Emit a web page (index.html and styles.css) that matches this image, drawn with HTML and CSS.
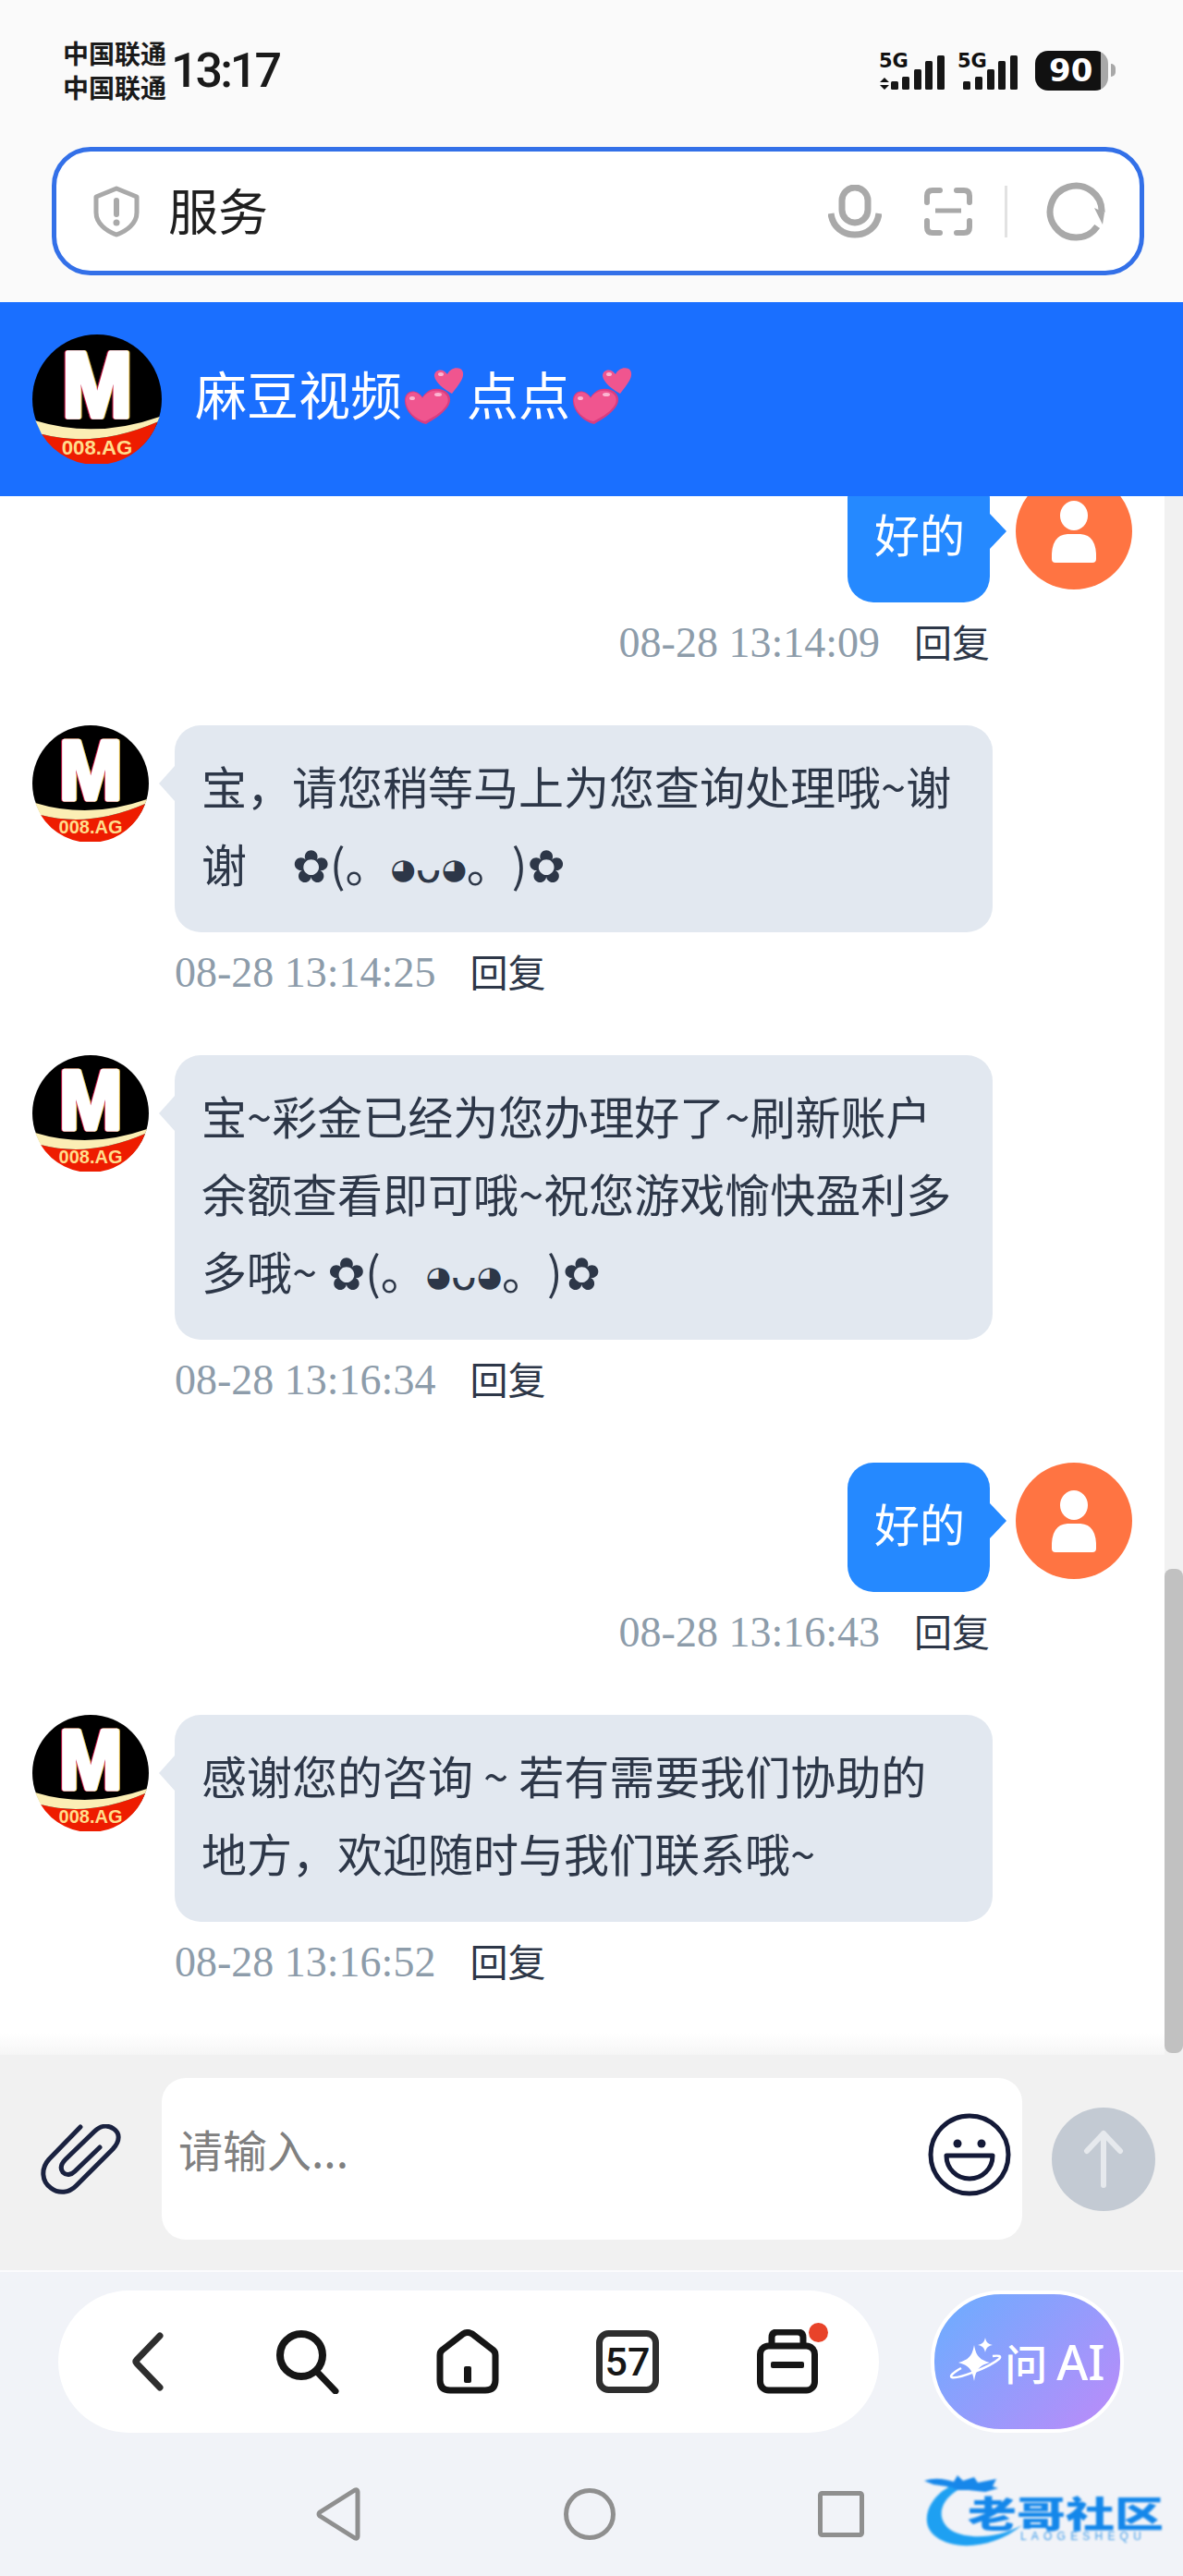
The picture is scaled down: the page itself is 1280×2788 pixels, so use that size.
FILE: index.html
```html
<!DOCTYPE html>
<html lang="zh-CN">
  <head>
    <meta charset="UTF-8" />
    <title>麻豆视频</title>
    <link rel="stylesheet" href="styles.css">
  </head>
  <body>
    <svg class="defs" width="0" height="0">
      <symbol id="logo" viewBox="0 0 126 126">
        <circle cx="63" cy="63" r="63" fill="#000" />
        <path d="M9 97 Q62 111 122 85 A63 63 0 0 1 9 97Z" fill="#ee1c00" />
        <path d="M3 84 Q62 102 124 80 L122 85 Q62 111 9 97Z" fill="#fbeeb5" />
        <text x="63" y="80" text-anchor="middle" class="logo-m" textLength="68" lengthAdjust="spacingAndGlyphs">M</text>
        <text x="63" y="117" text-anchor="middle" class="logo-ag">008.AG</text>
      </symbol>
      <symbol id="hearts" viewBox="0 0 66 64">
        <path d="M24 62 C14 60 2 50 1 38 C0 28 8 24 15 28 C17 29 19 31 20 33 C25 25 33 22 42 25 C50 28 53 36 47 44 C41 52 32 57 24 62Z" fill="#d93d80" />
        <path d="M23 59 C13 57 3 48 2 37 C2 29 9 25 15 29 C17 30 19 32 20 34 C25 27 33 24 41 27 C48 30 50 37 45 43 C40 50 31 55 23 59Z" fill="#f0558f" />
        <path d="M52 29 C44 25 34 17 33 10 C33 4 39 2 44 5 C45 6 46 7 47 8 C50 2 56 0 61 2 C65 4 65 10 62 15 C59 20 55 25 52 29Z" fill="#f0558f" />
        <ellipse cx="9" cy="34" rx="3" ry="2" fill="#fbb6d2" />
        <ellipse cx="37" cy="30" rx="4" ry="2" fill="#fbb6d2" />
        <ellipse cx="40" cy="8" rx="3" ry="2" fill="#fbb6d2" />
      </symbol>
      <symbol id="user" viewBox="0 0 126 126">
        <circle cx="63" cy="63" r="63" fill="#ff7442" />
        <ellipse cx="63" cy="46" rx="15" ry="16" fill="#fff" />
        <path d="M39 93 Q38 67 56 66 L70 66 Q88 67 87 93 Q87 97 83 97 L43 97 Q39 97 39 93Z" fill="#fff" />
      </symbol>
    </svg>

    <div class="browser-top">
      <div class="statusbar">
        <div class="carrier"><span>中国联通</span><span>中国联通</span></div>
        <div class="clock">13:17</div>
        <div class="status-icons">
          <svg class="signal" width="72" height="44" viewBox="0 0 72 44">
            <text x="0" y="18" class="five-g">5G</text>
            <path d="M6 29 L11 34 H1Z M6 42 L11 37 H1Z" fill="#111" />
            <rect x="13" y="33" width="8" height="9" rx="1.5" />
            <rect x="25" y="28" width="8" height="14" rx="1.5" />
            <rect x="38" y="20" width="8" height="22" rx="1.5" />
            <rect x="50" y="11" width="8" height="31" rx="1.5" />
            <rect x="63" y="5" width="8" height="37" rx="1.5" />
          </svg>
          <svg class="signal second" width="66" height="44" viewBox="0 0 66 44">
            <text x="0" y="18" class="five-g">5G</text>
            <rect x="6" y="33" width="8" height="9" rx="1.5" />
            <rect x="19" y="28" width="8" height="14" rx="1.5" />
            <rect x="32" y="20" width="8" height="22" rx="1.5" />
            <rect x="44" y="11" width="8" height="31" rx="1.5" />
            <rect x="57" y="5" width="8" height="37" rx="1.5" />
          </svg>
          <div class="battery"><span>90</span></div>
          <div class="battery-nub"></div>
        </div>
      </div>
      <div class="urlbar">
        <svg class="shield" width="50" height="56" viewBox="0 0 50 56">
          <path d="M25 3 L47 12 V29 C47 41 36 49 25 53 C14 49 3 41 3 29 V12Z" fill="none" stroke="#a9a9a9" stroke-width="5" stroke-linejoin="round" />
          <rect x="22" y="13" width="6" height="21" rx="3" fill="#a9a9a9" />
          <circle cx="25" cy="40" r="3.5" fill="#a9a9a9" />
        </svg>
        <div class="url-text">服务</div>
        <svg class="mic" width="58" height="58" viewBox="0 0 58 58">
          <rect x="15" y="3" width="28" height="38" rx="14" fill="none" stroke="#a9a9a9" stroke-width="7" />
          <path d="M3 31 C5 46 16 54 29 54 C42 54 53 46 55 31" fill="none" stroke="#a9a9a9" stroke-width="7" />
        </svg>
        <svg class="scan" width="52" height="52" viewBox="0 0 52 52">
          <path d="M3 16 V9 Q3 3 9 3 H17 M35 3 H43 Q49 3 49 9 V16 M49 36 V43 Q49 49 43 49 H35 M17 49 H9 Q3 49 3 43 V36" fill="none" stroke="#a9a9a9" stroke-width="6" stroke-linecap="round" />
          <path d="M12 25 H40" stroke="#a9a9a9" stroke-width="5" />
        </svg>
        <div class="url-divider"></div>
        <svg class="reload" width="64" height="64" viewBox="0 0 64 64">
          <path d="M59 40 A28 28 0 1 1 59 24" fill="none" stroke="#a9a9a9" stroke-width="7" transform="rotate(18 32 32)" />
          <path d="M52 28 L63 33 L61 46Z" fill="#a9a9a9" />
        </svg>
      </div>
    </div>

    <header class="chat-header">
      <svg class="header-logo" width="140" height="140"><use href="#logo" /></svg>
      <div class="chat-title">
        <span class="title-text">麻豆视频</span>
        <svg class="hearts" width="66" height="64"><use href="#hearts" /></svg>
        <span class="title-text">点点</span>
        <svg class="hearts" width="66" height="64"><use href="#hearts" /></svg>
      </div>
    </header>

    <main class="chat">
      <div class="chat-list">
        <div class="msg msg-me">
          <div class="msg-row">
            <div class="bubble">好的</div>
            <svg class="avatar" width="126" height="126"><use href="#user" /></svg>
          </div>
          <div class="msg-meta"><span class="msg-time">08-28 13:14:09</span><span class="msg-reply">回复</span></div>
        </div>

        <div class="msg">
          <div class="msg-row">
            <svg class="avatar" width="126" height="126"><use href="#logo" /></svg>
            <div class="bubble">宝，请您稍等马上为您查询处理哦~谢谢 &nbsp; &nbsp;<span class="kao-flower kao-indent">✿</span>(。<span class="kao-eye">◕</span><span class="kao-mouth">ᴗ</span><span class="kao-eye">◕</span>。)<span class="kao-flower">✿</span></div>
          </div>
          <div class="msg-meta"><span class="msg-time">08-28 13:14:25</span><span class="msg-reply">回复</span></div>
        </div>

        <div class="msg">
          <div class="msg-row">
            <svg class="avatar" width="126" height="126"><use href="#logo" /></svg>
            <div class="bubble">宝~彩金已经为您办理好了~刷新账户余额查看即可哦~祝您游戏愉快盈利多多哦~ <span class="kao-flower">✿</span>(。<span class="kao-eye">◕</span><span class="kao-mouth">ᴗ</span><span class="kao-eye">◕</span>。)<span class="kao-flower">✿</span></div>
          </div>
          <div class="msg-meta"><span class="msg-time">08-28 13:16:34</span><span class="msg-reply">回复</span></div>
        </div>

        <div class="msg msg-me">
          <div class="msg-row">
            <div class="bubble">好的</div>
            <svg class="avatar" width="126" height="126"><use href="#user" /></svg>
          </div>
          <div class="msg-meta"><span class="msg-time">08-28 13:16:43</span><span class="msg-reply">回复</span></div>
        </div>

        <div class="msg">
          <div class="msg-row">
            <svg class="avatar" width="126" height="126"><use href="#logo" /></svg>
            <div class="bubble">感谢您的咨询 ~ 若有需要我们协助的地方，欢迎随时与我们联系哦~</div>
          </div>
          <div class="msg-meta"><span class="msg-time">08-28 13:16:52</span><span class="msg-reply">回复</span></div>
        </div>
      </div>
      <div class="chat-fade"></div>
      <div class="scroll-track"><div class="scroll-thumb"></div></div>
    </main>

    <div class="inputbar">
      <svg class="clip" width="87" height="76" viewBox="0 0 87 76">
        <path d="M43 3 L9 38 C0 48 1 62 11 69 C20 76 31 74 38 67 L78 27 C87 17 85 9 79 5 C72 0 64 2 58 8 L27 38 C22 43 21 48 24 52 C28 56 33 55 37 51 L64 25" fill="none" stroke="#1a2240" stroke-width="5" stroke-linecap="round" />
      </svg>
      <div class="input-box">
        <span class="placeholder">请输入...</span>
        <svg class="smile" width="90" height="90" viewBox="0 0 90 90">
          <circle cx="45" cy="45" r="42" fill="none" stroke="#141a38" stroke-width="5" />
          <circle cx="32" cy="33" r="4.5" fill="#141a38" />
          <circle cx="58" cy="33" r="4.5" fill="#141a38" />
          <path d="M20 46 H70 C70 60 59 71 45 71 C31 71 20 60 20 46Z" fill="none" stroke="#141a38" stroke-width="5" stroke-linejoin="round" />
        </svg>
      </div>
      <div class="send">
        <svg width="44" height="64" viewBox="0 0 44 64">
          <path d="M22 60 V4 M4 23 L22 4 L40 23" fill="none" stroke="#e6e9ed" stroke-width="6" stroke-linecap="round" stroke-linejoin="round" />
        </svg>
      </div>
    </div>

    <div class="browser-bottom">
      <div class="toolbar-row">
        <nav class="toolbar">
          <svg class="tool" width="34" height="64" viewBox="0 0 34 64">
            <path d="M30 4 L5 30 Q3 32 5 34 L30 60" fill="none" stroke="#2e2e2e" stroke-width="7" stroke-linecap="round" stroke-linejoin="round" />
          </svg>
          <svg class="tool" width="68" height="70" viewBox="0 0 68 70">
            <circle cx="27" cy="28" r="23" fill="none" stroke="#161616" stroke-width="8" />
            <path d="M44 46 L64 67" stroke="#161616" stroke-width="7" stroke-linecap="round" />
          </svg>
          <svg class="tool" width="68" height="70" viewBox="0 0 68 70">
            <path d="M4 28 Q4 24 7 22 L29 5 Q34 2 39 5 L61 22 Q64 24 64 28 V55 Q64 66 53 66 H15 Q4 66 4 55Z" fill="none" stroke="#161616" stroke-width="7" stroke-linejoin="round" />
            <rect x="30" y="40" width="8" height="18" rx="2" fill="#161616" />
          </svg>
          <svg class="tool" width="68" height="68" viewBox="0 0 68 68">
            <rect x="3.500" y="3.500" width="61" height="61" rx="10" fill="none" stroke="#2e2e2e" stroke-width="7" />
            <text x="34" y="49" text-anchor="middle" class="tab-count">57</text>
          </svg>
          <div class="tool-bag">
            <svg width="66" height="70" viewBox="0 0 66 70">
              <path d="M16 18 V9 Q16 3 22 3 H44 Q50 3 50 9 V18" fill="none" stroke="#161616" stroke-width="7" />
              <rect x="3.500" y="18" width="59" height="48" rx="9" fill="none" stroke="#161616" stroke-width="7" />
              <rect x="15" y="35" width="36" height="7" rx="2" fill="#161616" />
            </svg>
            <span class="red-dot"></span>
          </div>
        </nav>
        <div class="ask-ai">
          <svg width="58" height="52" viewBox="0 0 58 52">
            <path d="M27 8 C29 20 33 24 44 27 C33 30 29 34 27 47 C25 34 21 30 10 27 C21 24 25 20 27 8Z" fill="#fff" />
            <path d="M39 0 C40 5 42 7 47 8 C42 9 40 11 39 16 C38 11 36 9 31 8 C36 7 38 5 39 0Z" fill="#fff" />
            <path d="M13 33 C4 38 0 42 3 43 C9 45 44 32 54 23 C57 20 54 19 47 20" fill="none" stroke="#fff" stroke-width="2.500" />
          </svg>
          <span class="ai-wen">问</span><span class="ai-label">AI</span>
        </div>
      </div>
      <div class="sysnav">
        <svg width="50" height="58" viewBox="0 0 50 58">
          <path d="M46 5 V53 Q46 56 43 55 L5 31 Q3 29 5 27 L43 3 Q46 2 46 5Z" fill="none" stroke="#8f8f8f" stroke-width="5" stroke-linejoin="round" />
        </svg>
        <svg width="56" height="56" viewBox="0 0 56 56">
          <circle cx="28" cy="28" r="25.500" fill="none" stroke="#8f8f8f" stroke-width="5" />
        </svg>
        <svg width="50" height="50" viewBox="0 0 50 50">
          <rect x="2.500" y="2.500" width="45" height="45" rx="2" fill="none" stroke="#8f8f8f" stroke-width="5" />
        </svg>
      </div>
      <div class="watermark">
        <svg width="130" height="92" viewBox="0 0 130 92">
          <path d="M2 14 C14 10 24 12 34 15 L38 8 L44 14 L56 10 L60 16 L80 12 L76 20 L82 22 L68 26 L50 24 L36 24 L26 20 L12 18Z" fill="#1787ea" />
          <path d="M30 20 C6 32 -4 60 14 74 C34 90 76 88 108 62 C82 76 50 78 32 68 C16 58 16 38 38 24Z" fill="#1ea0f2" />
        </svg>
        <span class="wm-name">老哥社区</span>
        <span class="wm-latin">LAOGESHEQU</span>
      </div>
    </div>
  </body>
</html>
```

FILE: styles.css
```css
html, body {
  margin: 0;
  padding: 0;
}

body {
  width: 1280px;
  height: 2788px;
  overflow: hidden;
  font-family: "Noto Sans CJK SC", "Noto Sans", sans-serif;
  background-color: #fff;
  display: flex;
  flex-direction: column;
}

.defs {
  position: absolute;
}

svg {
  display: block;
  flex-shrink: 0;
}

.logo-m {
  font-family: "Liberation Sans", sans-serif;
  font-weight: 700;
  font-size: 90px;
  fill: #fff;
  stroke: #fff;
  stroke-width: 5px;
  stroke-linejoin: round;
  filter: drop-shadow(-1px 0 0 #c8184a) drop-shadow(1px 0 0 #f0c850);
}

.logo-ag {
  font-family: "Liberation Sans", sans-serif;
  font-weight: 700;
  font-size: 20px;
  fill: #ffdd8c;
}

/* browser chrome, top */
.browser-top {
  height: 327px;
  background-color: #fafafa;
  box-sizing: border-box;
}

.statusbar {
  height: 159px;
  box-sizing: border-box;
  padding: 39px 73px 0 68px;
  display: flex;
  align-items: flex-start;
}

.carrier {
  display: flex;
  flex-direction: column;
  font-size: 28px;
  font-weight: 700;
  line-height: 37px;
  color: #1a1a1a;
}

.clock {
  margin: 9px 0 0 5px;
  font-family: Roboto, sans-serif;
  font-weight: 500;
  font-size: 52px;
  line-height: 58px;
  letter-spacing: -3px;
  color: #1a1a1a;
}

.status-icons {
  margin-left: auto;
  display: flex;
  align-items: flex-start;
  padding-top: 16px;
}

.signal rect {
  fill: #161616;
}

.signal.second {
  margin-left: 13px;
}

.five-g {
  font-family: "DejaVu Sans", sans-serif;
  font-weight: 700;
  font-size: 21px;
  fill: #111;
}

.battery {
  margin-left: 18px;
  width: 79px;
  height: 43px;
  box-sizing: border-box;
  border-radius: 14px;
  background: linear-gradient(to right, #111 90%, #a8a8a8 90%);
  display: flex;
  align-items: center;
  padding-left: 15px;
  color: #fff;
}

.battery span {
  font-family: "DejaVu Sans", sans-serif;
  font-weight: 700;
  font-size: 34px;
  line-height: 43px;
}

.battery-nub {
  margin: 14px 0 0 3px;
  width: 5px;
  height: 14px;
  border-radius: 0 5px 5px 0;
  background-color: #a8a8a8;
}

.urlbar {
  margin: 0 42px 0 56px;
  height: 139px;
  box-sizing: border-box;
  background-color: #fff;
  border: 5px solid #3370e8;
  border-radius: 42px;
  display: flex;
  align-items: center;
  padding-left: 40px;
}

.url-text {
  margin: -3px 0 0 31px;
  font-size: 54px;
  line-height: 70px;
  color: #1f1f1f;
}

.mic {
  margin-left: auto;
}

.scan {
  margin-left: 46px;
}

.url-divider {
  margin-left: 35px;
  width: 3px;
  height: 56px;
  background-color: #e2e2e2;
}

.reload {
  margin: 0 37px 0 42px;
}

/* chat header */
.chat-header {
  height: 210px;
  background-color: #1a6fff;
  display: flex;
  align-items: center;
  padding-left: 35px;
  gap: 36px;
  position: relative;
  z-index: 2;
}

.chat-title {
  display: flex;
  align-items: center;
  color: #fff;
  font-size: 56px;
  line-height: 70px;
}

.title-text {
  margin-top: -14px;
}

.hearts {
  margin: -6px 2px 0 2px;
}

/* messages */
.chat {
  height: 1687px;
  overflow: hidden;
  position: relative;
  background-color: #fff;
}

.chat-list {
  margin-top: -25px;
}

.msg {
  padding-bottom: 65px;
}

.msg-row {
  display: flex;
  align-items: flex-start;
  gap: 28px;
  padding: 0 55px 0 35px;
}

.msg-me .msg-row {
  justify-content: flex-end;
}

.bubble {
  position: relative;
  width: 885px;
  box-sizing: border-box;
  padding: 23px 32px 33px 29px;
  border-radius: 28px;
  background-color: #e2e8f0;
  color: #2d3748;
  font-size: 49px;
  line-height: 84px;
  text-spacing-trim: space-all;
}

.bubble::before {
  content: "";
  position: absolute;
  left: -17px;
  top: 44px;
  border-top: 19px solid transparent;
  border-bottom: 19px solid transparent;
  border-right: 17px solid #e2e8f0;
}

.kao-flower,
.kao-eye,
.kao-mouth {
  font-family: "DejaVu Sans", sans-serif;
  line-height: 1;
}

.kao-flower {
  font-size: 49px;
}

.kao-indent {
  margin-left: 5px;
}

.kao-eye {
  font-size: 31px;
  vertical-align: 0.12em;
}

.kao-mouth {
  font-size: 46px;
}

.msg-me .bubble {
  width: auto;
  padding-right: 27px;
  background-color: #2589ff;
  color: #fff;
}

.msg-me .bubble::before {
  left: auto;
  right: -18px;
  border-right: 0;
  border-left: 18px solid #2589ff;
}

.msg-meta {
  margin-top: 21px;
  margin-bottom: 1px;
  padding-left: 189px;
  height: 46px;
  display: flex;
  align-items: center;
  gap: 37px;
}

.msg-me .msg-meta {
  justify-content: flex-end;
  padding-left: 0;
  padding-right: 209px;
}

.msg-time {
  font-family: "Liberation Serif", serif;
  font-size: 46px;
  line-height: 46px;
  color: #8d9caa;
}

.msg-reply {
  margin-bottom: 6px;
  font-size: 41px;
  line-height: 46px;
  color: #2d3748;
}

.chat-fade {
  position: absolute;
  left: 0;
  right: 20px;
  bottom: 0;
  height: 24px;
  background: linear-gradient(to bottom, rgba(245, 245, 245, 0), #f6f6f6);
}

.scroll-track {
  position: absolute;
  top: 0;
  right: 0;
  bottom: 0;
  width: 20px;
  background-color: #f1f1f1;
}

.scroll-thumb {
  position: absolute;
  top: 1161px;
  left: 0;
  width: 20px;
  height: 524px;
  border-radius: 8px;
  background-color: #c1c1c1;
}

/* input */
.inputbar {
  height: 233px;
  box-sizing: border-box;
  background-color: #f1f1f1;
  display: flex;
  align-items: center;
  padding: 25px 30px 33px 44px;
}

.input-box {
  margin-left: 44px;
  width: 931px;
  height: 175px;
  box-sizing: border-box;
  border-radius: 26px;
  background-color: #fff;
  display: flex;
  align-items: center;
  justify-content: space-between;
  padding: 0 12px 10px 18px;
}

.placeholder {
  margin-top: -14px;
  font-size: 48px;
  line-height: 60px;
  color: #808080;
}

.send {
  margin-left: 32px;
  width: 112px;
  height: 112px;
  border-radius: 50%;
  background-color: #c3cad3;
  display: flex;
  align-items: center;
  justify-content: center;
}

/* browser chrome, bottom */
.browser-bottom {
  flex: 1;
  background-color: #f1f3f8;
  border-top: 2px solid #fbfbfd;
  position: relative;
}

.toolbar-row {
  display: flex;
  padding: 20px 0 0 63px;
}

.toolbar {
  width: 888px;
  height: 154px;
  box-sizing: border-box;
  border-radius: 77px;
  background-color: #fff;
  padding-left: 10px;
  display: grid;
  grid-template-columns: repeat(5, 173px);
  align-items: center;
  justify-items: center;
}

.tab-count {
  font-family: Roboto, sans-serif;
  font-weight: 500;
  font-size: 43px;
  fill: #161616;
}

.tool-bag {
  position: relative;
}

.red-dot {
  position: absolute;
  top: -7px;
  right: -11px;
  width: 21px;
  height: 21px;
  border-radius: 50%;
  background-color: #e8432a;
}

.ask-ai {
  margin-left: 56px;
  width: 209px;
  height: 154px;
  box-sizing: border-box;
  border: 4px solid #fff;
  border-radius: 76px;
  background: linear-gradient(135deg, #6aaeff, #bd8af9);
  display: flex;
  align-items: center;
  justify-content: center;
  color: #fff;
  font-weight: 500;
}

.ai-wen {
  margin-left: 2px;
  font-size: 46px;
  line-height: 60px;
}

.ai-label {
  margin-left: 10px;
  font-family: "Noto Sans", sans-serif;
  font-size: 52px;
  line-height: 60px;
}

.sysnav {
  margin-top: 59px;
  padding-left: 230px;
  display: grid;
  grid-template-columns: repeat(3, 272px);
  align-items: center;
  justify-items: center;
}

.watermark {
  position: absolute;
  left: 998px;
  top: 212px;
  width: 282px;
  height: 100px;
  filter: blur(0.8px);
}

.wm-name {
  position: absolute;
  left: 49px;
  top: 17px;
  font-size: 53px;
  line-height: 60px;
  font-weight: 900;
  color: #1487ea;
  white-space: nowrap;
  transform: scaleY(0.72);
}

.wm-latin {
  position: absolute;
  left: 106px;
  top: 67px;
  font-family: "Liberation Sans", sans-serif;
  font-size: 12px;
  line-height: 14px;
  letter-spacing: 5.200px;
  color: #3f9be8;
}
```
